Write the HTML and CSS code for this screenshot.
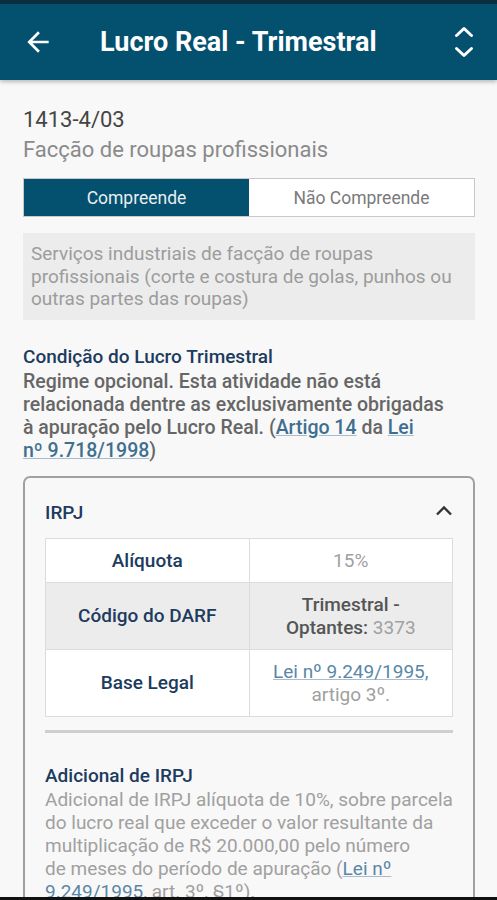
FILE: index.html
```html
<!DOCTYPE html>
<html lang="pt-BR">
<head>
  <meta charset="UTF-8">
  <title>Lucro Real - Trimestral</title>
  <link rel="stylesheet" href="styles.css">
</head>
<body>

  <div class="status"></div>
  <header class="appbar">
    <svg class="back" width="32" height="32" viewBox="0 0 24 24">
      <path d="M20 11H7.83l5.59-5.59L12 4l-8 8 8 8 1.41-1.41L7.83 13H20v-2z" fill="#fff"/>
    </svg>
    <h1>Lucro Real - Trimestral</h1>
    <svg class="sort" width="20" height="32" viewBox="0 0 20 32">
      <path d="M2.5 9.5l7.5-7 7.5 7M2.5 22.5l7.5 7 7.5-7" fill="none" stroke="#fff" stroke-width="3" stroke-linecap="round" stroke-linejoin="round"/>
    </svg>
  </header>

  <main class="content">
    <div class="code">1413-4/03</div>
    <div class="name">Facção de roupas profissionais</div>

    <div class="tabs">
      <div class="tab active">Compreende</div>
      <div class="tab">Não Compreende</div>
    </div>

    <div class="desc">
      Serviços industriais de facção de roupas profissionais (corte e costura de golas, punhos ou outras partes das roupas)
    </div>

    <h2 class="section-title">Condição do Lucro Trimestral</h2>
    <p class="condition">
      Regime opcional. Esta atividade não está relacionada dentre as exclusivamente obrigadas à&nbsp;apuração pelo Lucro Real. (<a href="#">Artigo 14</a> da <a href="#">Lei nº&nbsp;9.718/1998</a>)
    </p>

    <section class="card">
      <div class="card-head">
        <h3>IRPJ</h3>
        <svg width="18" height="11" viewBox="0 0 18 11">
          <path d="M2 9.5l7-7 7 7" fill="none" stroke="#333" stroke-width="2.4"/>
        </svg>
      </div>

      <table class="tax">
        <tr>
          <th>Alíquota</th>
          <td>15%</td>
        </tr>
        <tr class="shade">
          <th>Código do DARF</th>
          <td><b>Trimestral - Optantes:</b> 3373</td>
        </tr>
        <tr>
          <th>Base Legal</th>
          <td><a href="#">Lei nº 9.249/1995,</a> artigo 3º.</td>
        </tr>
      </table>

      <hr class="divider">

      <h3 class="extra-title">Adicional de IRPJ</h3>
      <p class="extra">
        Adicional de IRPJ alíquota de 10%, sobre parcela do lucro real que exceder o valor resultante da multiplicação de R$ 20.000,00 pelo número de&nbsp;meses do período de apuração (<a href="#">Lei nº 9.249/1995</a>, art. 3º, §1º).
      </p>
    </section>
  </main>

  <div class="navbar"></div>

</body>
</html>
```

FILE: styles.css
```css
body {
  font-family: Roboto, "Noto Sans", sans-serif;
  background-color: #f8f8f8;
  margin: 0;
  padding: 0;
  height: 900px;
  overflow: hidden;
  position: relative;
}

.status {
  height: 4px;
  background-color: #0b2e40;
}

.appbar {
  height: 76px;
  background-color: #04506f;
  display: flex;
  align-items: center;
  padding: 0 23px 0 22px;
  box-shadow: 0 2px 4px rgba(0, 0, 0, 0.25);
}

.appbar h1 {
  flex: 1;
  margin: 0 0 0 46px;
  color: #fff;
  font-size: 27px;
  font-weight: 700;
}

.content {
  padding: 27px 22px 0 23px;
}

.code {
  font-size: 22px;
  color: #454545;
  line-height: 26px;
}

.name {
  font-size: 22px;
  color: #8a8a8a;
  line-height: 26px;
  margin-top: 4px;
}

.tabs {
  display: flex;
  margin-top: 15px;
  height: 39px;
  border: 1px solid #c8c8c8;
  box-sizing: border-box;
}

.tab {
  flex: 1;
  display: flex;
  align-items: center;
  justify-content: center;
  font-size: 17.5px;
  color: #7a7a7a;
  background-color: #fff;
}

.tab.active {
  background-color: #04506f;
  color: #e8eef2;
}

.desc {
  margin-top: 16px;
  background-color: #ececec;
  padding: 10px 8px 9px;
  font-size: 19px;
  line-height: 22.5px;
  color: #9c9c9c;
}

.section-title {
  margin: 24px 0 0;
  font-size: 19px;
  font-weight: 500;
  color: #1d3b5e;
  line-height: 25px;
}

.condition {
  margin: 1px 0 0;
  font-size: 19.5px;
  font-weight: 500;
  color: #666;
  line-height: 23px;
}

a {
  color: #3e6f90;
  text-decoration: underline;
  text-decoration-color: #a8bccb;
}

.card {
  margin-top: 14px;
  border: 2px solid #a0a0a0;
  border-radius: 7px;
  padding: 0 20px 20px;
}

.card-head {
  display: flex;
  align-items: center;
  justify-content: space-between;
  height: 54px;
  padding-top: 6px;
}

.card-head h3,
.extra-title {
  margin: 0;
  font-size: 19px;
  font-weight: 500;
  color: #1d3b5e;
}

.card-head h3 {
  position: relative;
  top: 2px;
}

.tax {
  width: 100%;
  border-collapse: collapse;
  background-color: #fff;
  table-layout: fixed;
}

.tax th,
.tax td {
  border: 1px solid #dcdcdc;
  text-align: center;
  font-size: 19px;
  line-height: 23px;
  padding: 10px 12px;
}

.tax th {
  font-weight: 500;
  color: #1d3b5e;
}

.tax td {
  color: #a0a0a0;
}

.tax td b {
  font-weight: 500;
  color: #555;
}

.tax td a,
.extra a {
  color: #5a87a6;
}

.tax tr.shade th,
.tax tr.shade td {
  background-color: #ececec;
}

.divider {
  border: none;
  border-top: 3px solid #cfcfcf;
  margin: 13px 0 0;
}

.extra-title {
  margin-top: 30px;
  line-height: 25px;
}

.extra {
  margin: 0;
  font-size: 19px;
  line-height: 23px;
  color: #a0a0a0;
}

.navbar {
  position: absolute;
  left: 0;
  right: 0;
  bottom: 0;
  height: 3px;
  background-color: #111;
}
```
